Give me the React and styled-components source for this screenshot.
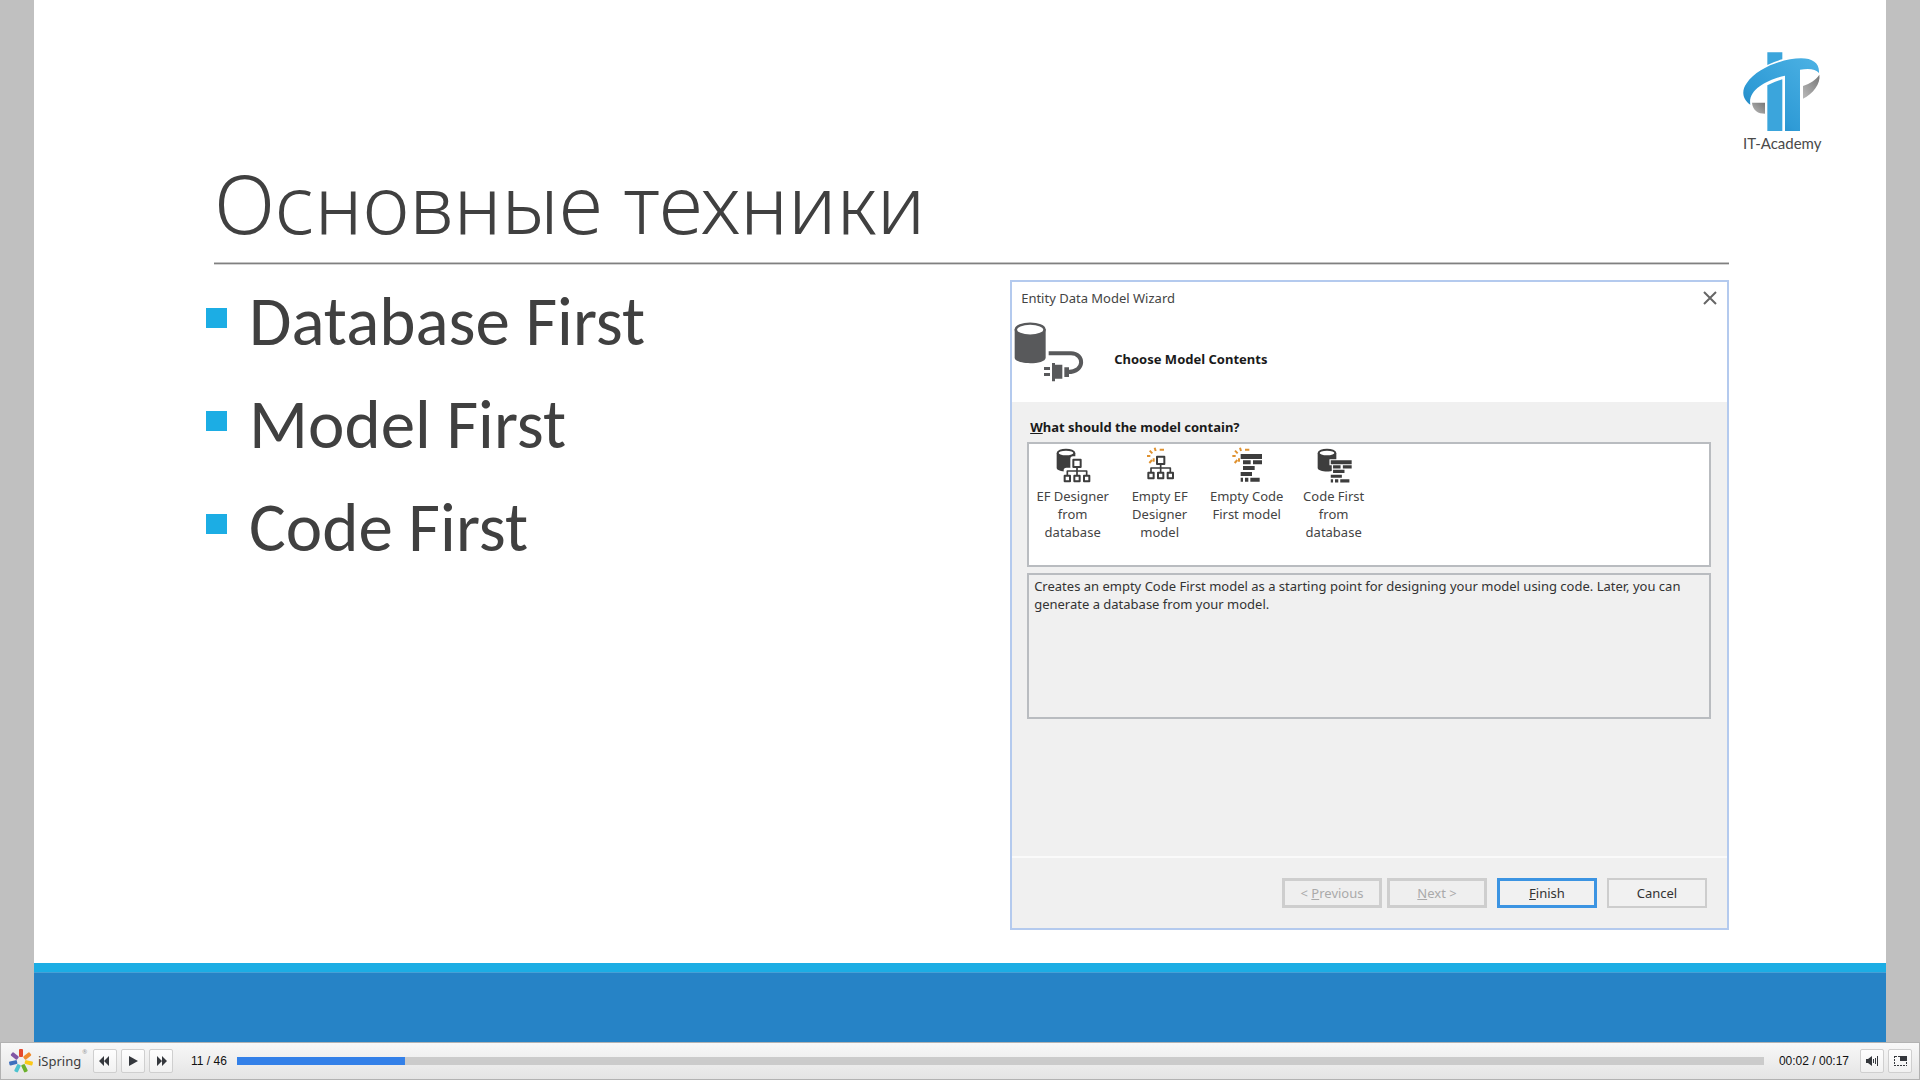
import React, { useState } from 'react';
import styled, { createGlobalStyle, css } from 'styled-components';

const GlobalStyle = createGlobalStyle`
  *, *::before, *::after { box-sizing: border-box; }
  html, body, #root { height: 100%; }
  body { margin: 0; background: #c0c0c0; overflow: hidden; }
  h1, h2, h3, p, ul { margin: 0; padding: 0; }
  button { font: inherit; margin: 0; }
`;

const slideFont = 'Carlito, Lato, "Liberation Sans", sans-serif';
const logoFont = 'Lato, "Noto Sans", sans-serif';
const wizardFont = '"Noto Sans", "Open Sans", sans-serif';
const playerFont = '"Liberation Sans", Arial, sans-serif';

/* ---------- page ---------- */

const Page = styled.div`
  display: flex;
  flex-direction: column;
  height: 100vh;
`;

const Slide = styled.main`
  flex: 1;
  display: flex;
  flex-direction: column;
  margin: 0 34px;
  background: #fff;
  color: #404040;
  min-height: 0;
`;

const SlideHeader = styled.header`
  display: grid;
  grid-template-columns: 1fr 157px;
  padding-left: 180px;
  height: 264px;
`;

const Title = styled.h1`
  display: flex;
  align-items: flex-end;
  border-bottom: 1px solid #808080;
  box-shadow: 0 1px #d4d4d4, inset 0 -1px #c4c4c4;
  padding-bottom: 6px;
  font: 300 81px/108px ${wizardFont};
`;

const Brand = styled.div`
  display: flex;
  flex-direction: column;
  align-items: flex-start;
  padding: 52px 0 0 14px;
  color: #4a4a4a;
  font: 400 15px/20px ${logoFont};
`;

const BrandMark = styled.svg`
  width: 80px;
  height: 80px;
  margin-bottom: 1px;
`;

const SlideBody = styled.div`
  flex: 1;
  display: flex;
  justify-content: space-between;
  align-items: flex-start;
  padding: 16px 157px 0 172px;
`;

const Techniques = styled.ul`
  display: flex;
  flex-direction: column;
  gap: 19px;
  list-style: none;
  font: 400 69px/84px ${slideFont};
`;

const Technique = styled.li`
  display: flex;
  align-items: flex-start;
  gap: 22px;

  &::before {
    content: '';
    width: 21px;
    height: 20px;
    margin-top: 28px;
    background: #1cade4;
  }
`;

const SlideFooter = styled.footer`
  height: 79px;
  background: #2683c6;
  border-top: 9px solid #1cade4;
  box-shadow: inset 0 1px #46a0d6;
`;

/* ---------- wizard ---------- */

const Wizard = styled.section`
  display: flex;
  flex-direction: column;
  flex: 0 0 47.2%;
  height: 650px;
  border: 2px solid #b4caee;
  background: #f0f0f0;
  color: #333;
  font: 400 13px/18px ${wizardFont};
`;

const WizardHead = styled.header`
  height: 120px;
  background: #fff;
`;

const WizardTitleBar = styled.div`
  display: flex;
  justify-content: space-between;
  align-items: center;
  height: 32px;
  padding: 0 10px 0 9px;
`;

const WizardName = styled.h2`
  font: inherit;
  color: #444;
`;

const CloseButton = styled.button`
  display: flex;
  border: 0;
  padding: 0;
  background: none;

  svg { width: 14px; height: 14px; }
`;

const WizardStep = styled.div`
  display: flex;
  align-items: center;
  gap: 30px;
  padding: 8px 2px 0;
`;

const StepIcon = styled.svg`
  width: 70px;
  height: 60px;
`;

const StepName = styled.h3`
  padding-top: 14px;
  font: inherit;
  font-weight: 700;
  color: #1a1a1a;
`;

const WizardBody = styled.div`
  flex: 1;
  padding: 16px 16px 0 15px;
`;

const Question = styled.h3`
  padding: 0 3px;
  margin-bottom: 6px;
  font: inherit;
  font-weight: 700;
  color: #1a1a1a;
`;

const panel = css`
  border: 2px solid #b9bcc0;
  width: 100%;
`;

const ModelList = styled.div`
  ${panel}
  display: flex;
  align-items: flex-start;
  height: 125px;
  padding: 3px 0;
  background: #fff;
`;

const ModelOption = styled.button`
  display: flex;
  flex-direction: column;
  align-items: center;
  gap: 4px;
  width: 87px;
  padding: 0 3px;
  border: 0;
  background: none;
  color: #444;
  text-align: center;

  svg { width: 36px; height: 36px; }
`;

const Description = styled.p`
  ${panel}
  height: 146px;
  margin-top: 6px;
  padding: 2px 5px;
`;

const WizardActions = styled.footer`
  display: flex;
  justify-content: flex-end;
  align-items: flex-start;
  height: 72px;
  padding: 20px 20px 0;
  border-top: 2px solid #fafafa;
`;

const ActionButton = styled.button`
  width: 100px;
  height: 30px;
  margin-left: ${(p) => (p.$apart ? 10 : 5)}px;
  padding: 0;
  border: ${(p) => (p.$primary ? '3px solid #3c94e2' : '2px solid #cdcdcd')};
  background: #f1f1f1;
  color: #333;

  &:disabled { color: #aaa; border: 3px solid #cecece; background: #efefef; }
`;

/* ---------- player ---------- */

const Player = styled.nav`
  display: flex;
  align-items: center;
  height: 38px;
  padding: 0 7px 0 8px;
  border: 1px solid #b2b2b2;
  background: linear-gradient(#f8f8f8, #e4e4e4);
  color: #111;
  font: 400 12px/16px ${playerFont};
`;

const PlayerLogo = styled.a`
  display: flex;
  align-items: center;
  gap: 5px;
  width: 84px;
  color: #3c3c3c;
  text-decoration: none;
  font: 400 13px/18px ${wizardFont};

  svg { width: 24px; height: 24px; }
  sup { font-size: 6px; line-height: 6px; color: #999; align-self: flex-start; margin-left: -4px; }
`;

const ControlGroup = styled.div`
  display: flex;
  gap: 4px;
`;

const ControlButton = styled.button`
  display: grid;
  place-items: center;
  width: 24px;
  height: 24px;
  padding: 0;
  border: 1px solid #cfcfcf;
  border-radius: 2px;
  background: linear-gradient(#fefefe, #f1f1f1);

  svg { width: 14px; height: 14px; fill: #35383d; }
`;

const Counter = styled.span`
  white-space: nowrap;
  margin: ${(p) => (p.$end ? '0 11px 0 15px' : '0 10px 0 18px')};
`;

const Seek = styled.input`
  appearance: none;
  flex: 1;
  min-width: 0;
  height: 8px;
  margin: 0;
  background: linear-gradient(#3380e8, #3380e8) 0 0 / ${(p) => p.value}% 100% no-repeat #cbcbcb;

  &::-webkit-slider-thumb { appearance: none; width: 1px; height: 8px; background: transparent; }
`;

/* ---------- drawings ---------- */

const Cylinder = () => (
  <g>
    <path d="M5 18V62C5 77 61 77 61 62V18Z" fill="#3d3d3d" />
    <ellipse cx="33" cy="18" rx="25" ry="10" fill="#fff" stroke="#3d3d3d" strokeWidth="6" />
  </g>
);

const Tree = () => (
  <g fill="none" strokeLinejoin="round">
    <path d="M66 34V82M34 82V70H98V82M54 36H78V60H54Z" stroke="#fff" strokeWidth="16" />
    <path d="M66 62V84M37 84V72H95V84" stroke="#3d3d3d" strokeWidth="5" />
    <path d="M55 38H77V60H55ZM29 86H45V103H29ZM58 86H74V103H58ZM87 86H103V103H87Z" fill="#fff" stroke="#3d3d3d" strokeWidth="6" />
  </g>
);

const Bars = () => (
  <g>
    <path d="M31 17H103V56H82V73H74V88H96V108H31V72H38V40H31Z" fill="#fff" />
    <path d="M35 21H99V36H35ZM42 40H65V52H42ZM72 40H99V52H72ZM42 57H77V69H42ZM35 75H69V87H35ZM35 92H42V104H35ZM48 92H58V104H48ZM64 92H92V104H64Z" fill="#3d3d3d" />
  </g>
);

const Spark = () => (
  <path d="M38 2L41 12M53 8H66M23 11L31 19M15 27H25M22 48L30 39M35 34V44" stroke="#df9231" strokeWidth="6" fill="none" />
);

const MODELS = [
  { label: 'EF Designer from database', art: <><Cylinder /><Tree /></> },
  { label: 'Empty EF Designer model', art: <><g transform="translate(-10 -9)"><Tree /></g><Spark /></> },
  { label: 'Empty Code First model', art: <><Bars /><g transform="translate(-5 0)"><Spark /></g></> },
  { label: 'Code First from database', art: <><Cylinder /><g transform="translate(10 23) scale(.98 .8)"><Bars /></g></> },
];

const AcademyMark = () => (
  <BrandMark viewBox="66 66 240 240" aria-hidden="true">
    <defs>
      <linearGradient id="swoosh" x1="0" y1="1" x2="1" y2="0">
        <stop offset="0" stopColor="#1878b4" />
        <stop offset=".35" stopColor="#2f9bd6" />
        <stop offset="1" stopColor="#4db2e4" />
      </linearGradient>
      <linearGradient id="ring" x1="0" y1="1" x2="1" y2="0">
        <stop offset="0" stopColor="#b9b9b9" />
        <stop offset="1" stopColor="#777" />
      </linearGradient>
    </defs>
    <path d="M139 67H184V88Q162 94 139 105Z" fill="#3ba5dc" />
    <path d="M139 166Q162 154 184 148V303H139Z" fill="#3ba5dc" />
    <path d="M88 224C62 206 62 180 77 160C108 112 190 85 240 85C276 85 296 100 294 129C284 116 262 115 237 119V303H192V137C140 148 80 178 88 224Z" fill="url(#swoosh)" />
    <path d="M295 134C300 160 275 192 246 206V168C268 160 284 150 295 134Z" fill="url(#ring)" />
    <path d="M93 218H132V251C112 251 95 242 93 218Z" fill="url(#ring)" />
  </BrandMark>
);

const PlugIcon = () => (
  <StepIcon viewBox="43 155 210 180" aria-hidden="true">
    <path d="M45 176V262C45 284 138 284 138 262V176Z" fill="#58595b" />
    <ellipse cx="91.5" cy="178" rx="43" ry="18" fill="#fff" stroke="#58595b" strokeWidth="7" />
    <path d="M147 249H214C255 249 257 305 205 305" fill="none" stroke="#58595b" strokeWidth="12" />
    <path d="M133 290H151V299H133ZM133 308H151V317H133ZM157 278H166V283H188V325H166V333H157ZM194 291H208V320H194Z" fill="#58595b" />
  </StepIcon>
);

const PETALS = ['#e5482d', '#f08a2c', '#fbc818', '#6bb02c', '#4cc3cf', '#3d6fbd', '#8156a5'];

const SpringMark = () => (
  <svg viewBox="-12 -12 24 24" aria-hidden="true">
    {PETALS.map((fill, i) => (
      <rect key={fill} x="-2" y="-12" width="4" height="8" rx="1" fill={fill} transform={`rotate(${(i * 360) / 7})`} />
    ))}
  </svg>
);

export default function App() {
  const [position, setPosition] = useState(11);

  return (
    <Page>
      <GlobalStyle />
      <Slide>
        <SlideHeader>
          <Title>Основные техники</Title>
          <Brand>
            <AcademyMark />
            IT-Academy
          </Brand>
        </SlideHeader>
        <SlideBody>
          <Techniques>
            <Technique>Database First</Technique>
            <Technique>Model First</Technique>
            <Technique>Code First</Technique>
          </Techniques>
          <Wizard aria-label="Entity Data Model Wizard">
            <WizardHead>
              <WizardTitleBar>
                <WizardName>Entity Data Model Wizard</WizardName>
                <CloseButton aria-label="Close">
                  <svg viewBox="0 0 14 14"><path d="M1 1L13 13M13 1L1 13" stroke="#666" strokeWidth="2" /></svg>
                </CloseButton>
              </WizardTitleBar>
              <WizardStep>
                <PlugIcon />
                <StepName>Choose Model Contents</StepName>
              </WizardStep>
            </WizardHead>
            <WizardBody>
              <Question><u>W</u>hat should the model contain?</Question>
              <ModelList>
                {MODELS.map(({ label, art }) => (
                  <ModelOption key={label}>
                    <svg viewBox="0 0 108 108" aria-hidden="true">{art}</svg>
                    {label}
                  </ModelOption>
                ))}
              </ModelList>
              <Description>
                Creates an empty Code First model as a starting point for designing your model using code. Later, you can
                generate a database from your model.
              </Description>
            </WizardBody>
            <WizardActions>
              <ActionButton disabled>&lt; <u>P</u>revious</ActionButton>
              <ActionButton disabled><u>N</u>ext &gt;</ActionButton>
              <ActionButton $primary $apart><u>F</u>inish</ActionButton>
              <ActionButton $apart>Cancel</ActionButton>
            </WizardActions>
          </Wizard>
        </SlideBody>
        <SlideFooter />
      </Slide>

      <Player aria-label="Player">
        <PlayerLogo href="#ispring">
          <SpringMark />
          iSpring<sup>®</sup>
        </PlayerLogo>
        <ControlGroup>
          <ControlButton aria-label="Previous slide">
            <svg viewBox="0 0 14 14"><path d="M6 2V12L1 7ZM11 2V12L6 7Z" /></svg>
          </ControlButton>
          <ControlButton aria-label="Play">
            <svg viewBox="0 0 14 14"><path d="M3 2L12 7L3 12Z" /></svg>
          </ControlButton>
          <ControlButton aria-label="Next slide">
            <svg viewBox="0 0 14 14"><path d="M3 2V12L8 7ZM8 2V12L13 7Z" /></svg>
          </ControlButton>
        </ControlGroup>
        <Counter>11 / 46</Counter>
        <Seek
          type="range"
          aria-label="Position"
          min="0"
          max="100"
          value={position}
          onChange={(e) => setPosition(Number(e.target.value))}
        />
        <Counter $end>00:02 / 00:17</Counter>
        <ControlGroup>
          <ControlButton aria-label="Volume">
            <svg viewBox="0 0 14 14">
              <path d="M1 5H3L7 2V12L3 9H1ZM8 5H9V9H8ZM10 4H11V10H10ZM12 2H13V12H12Z" />
            </svg>
          </ControlButton>
          <ControlButton aria-label="Full screen">
            <svg viewBox="0 0 14 14">
              <path d="M7 2H14V7H7Z" />
              <path d="M7 2.5H1M1.5 2V12M1 11.5H14M13.5 8V12" fill="none" stroke="#35383d" strokeDasharray="2 1" />
            </svg>
          </ControlButton>
        </ControlGroup>
      </Player>
    </Page>
  );
}
